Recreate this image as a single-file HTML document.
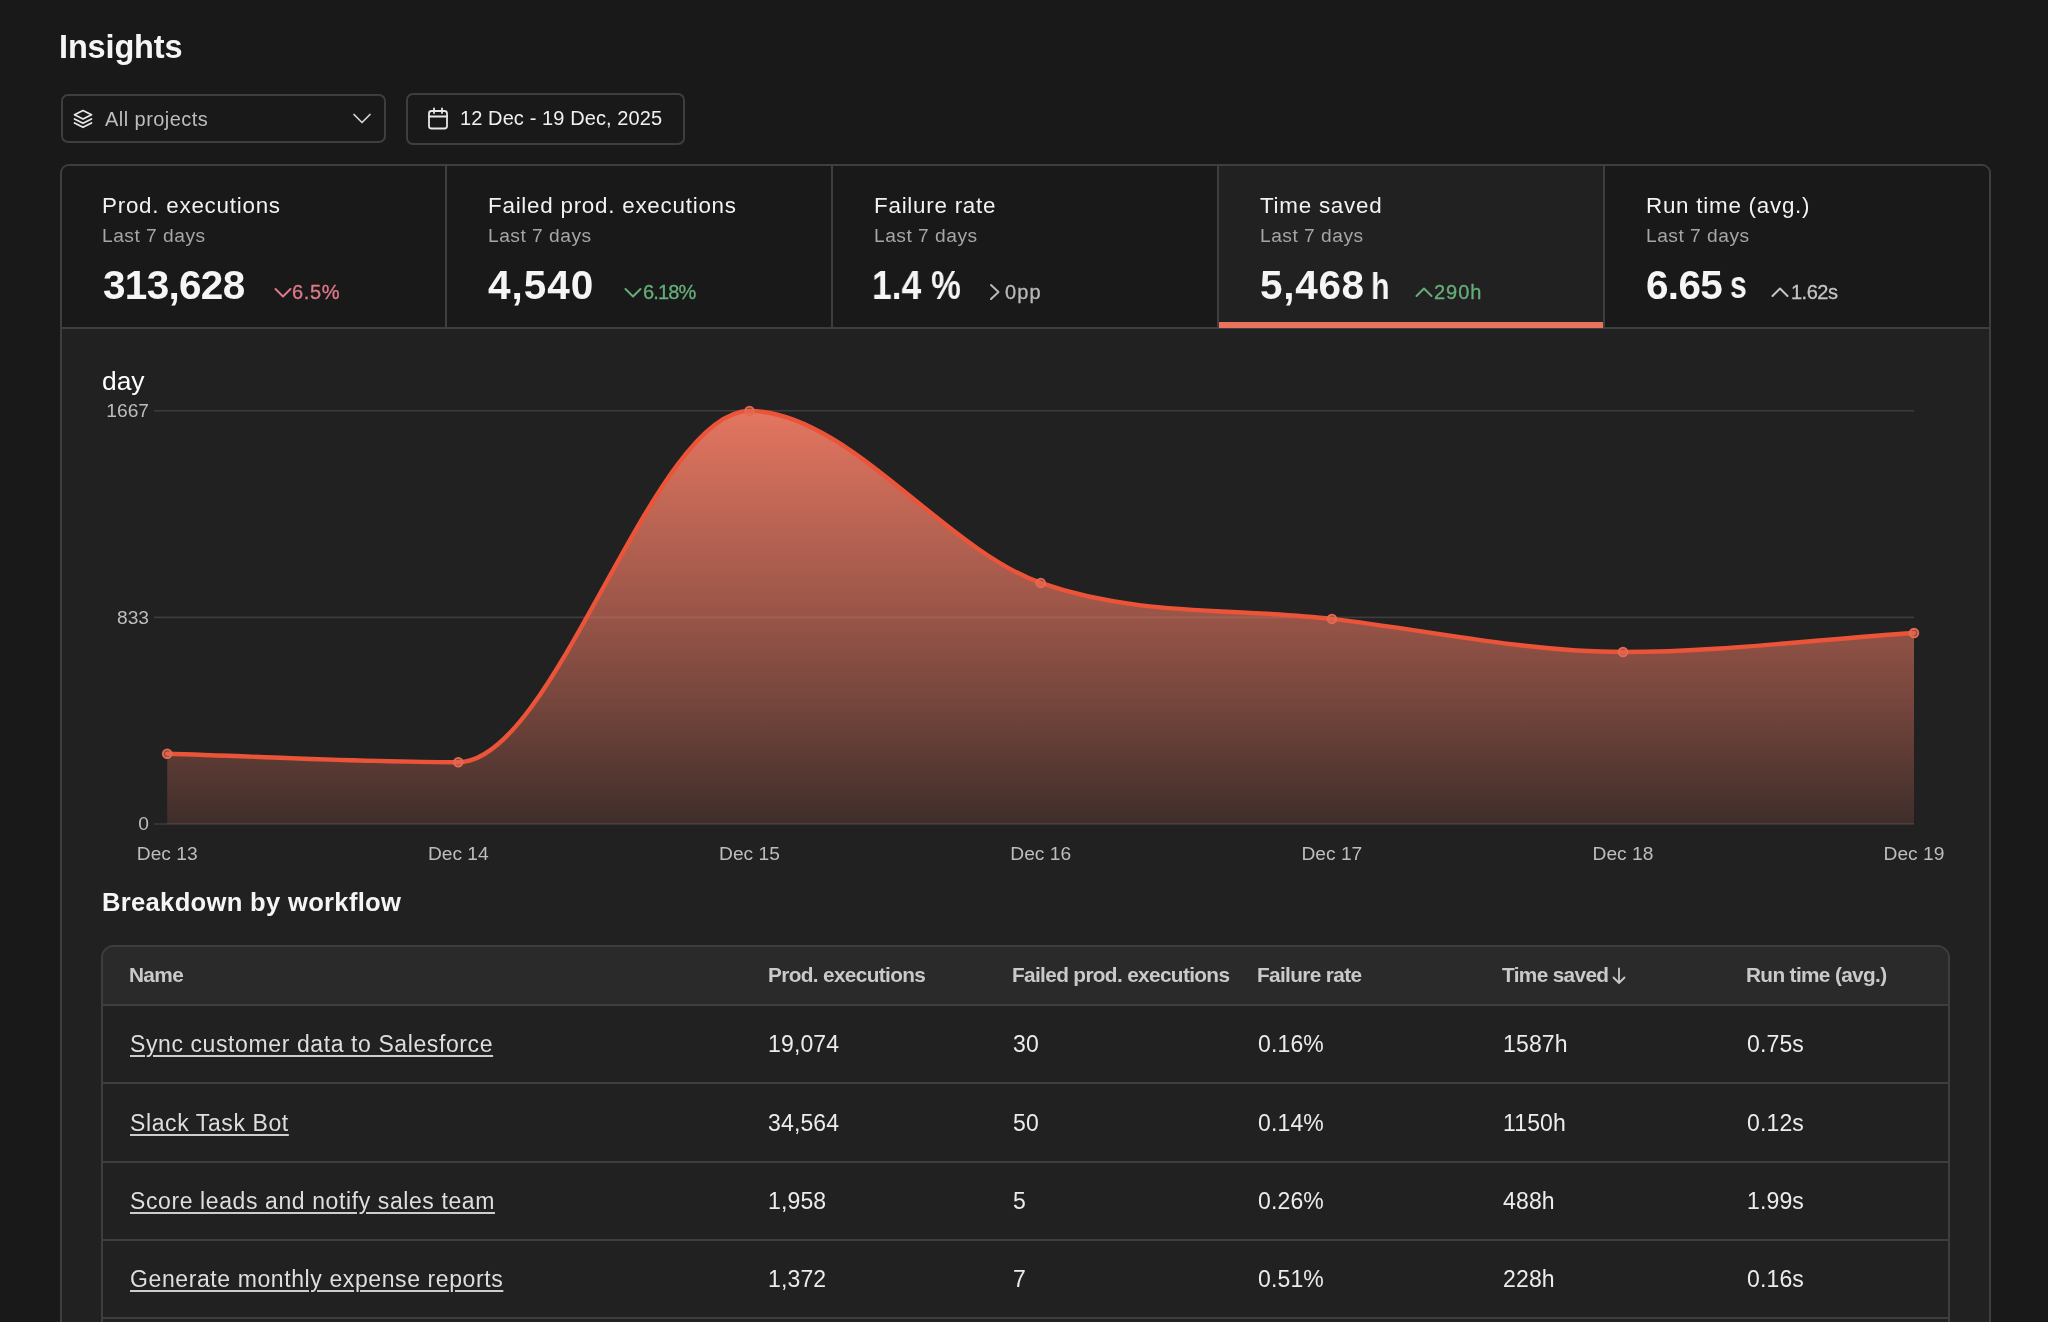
<!DOCTYPE html>
<html><head><meta charset="utf-8">
<style>
*{box-sizing:border-box;margin:0;padding:0}
html,body{width:2048px;height:1322px;overflow:hidden;background:#191919}
body{position:relative;font-family:"Liberation Sans",sans-serif;color:#f2f2f2}
.t{position:absolute;white-space:nowrap;line-height:1;will-change:transform}
.box{position:absolute;border:2px solid #3e3e3e}
</style></head><body>

<!-- title -->
<div class="t" style="left:58.5px;top:31px;font-size:32.5px;font-weight:bold;letter-spacing:-0.15px;color:#f5f5f5">Insights</div>

<!-- project dropdown -->
<div class="box" style="left:60.5px;top:94px;width:325.5px;height:48.5px;border-radius:7px;background:#191919"></div>
<svg style="position:absolute;left:72px;top:108px" width="22" height="22" viewBox="0 0 22 22" fill="none" stroke="#e8e8e8" stroke-width="1.7" stroke-linejoin="round" stroke-linecap="round">
  <path d="M11 2.5 L19.5 6.8 L11 11.1 L2.5 6.8 Z"/>
  <path d="M2.5 11 L11 15.3 L19.5 11"/>
  <path d="M2.5 15 L11 19.3 L19.5 15"/>
</svg>
<div class="t" style="left:104.5px;top:108.6px;font-size:20px;letter-spacing:0.45px;color:#bdbdbd">All projects</div>
<svg style="position:absolute;left:352px;top:112px" width="20" height="14" viewBox="0 0 20 14" fill="none" stroke="#d6d6d6" stroke-width="1.7" stroke-linecap="round" stroke-linejoin="round">
  <path d="M2 2.5 L10 10.5 L18 2.5"/>
</svg>

<!-- date button -->
<div class="box" style="left:406px;top:93px;width:279px;height:52px;border-radius:7px;background:#191919"></div>
<svg style="position:absolute;left:426px;top:106px" width="24" height="25" viewBox="0 0 24 25" fill="none" stroke="#e8e8e8" stroke-width="1.8" stroke-linecap="round" stroke-linejoin="round">
  <rect x="3" y="5" width="18" height="17.5" rx="2.5"/>
  <path d="M3 10.5 H21"/>
  <path d="M8 2.5 V7"/>
  <path d="M16 2.5 V7"/>
</svg>
<div class="t" style="left:460px;top:108.4px;font-size:20px;letter-spacing:0.1px;color:#f0f0f0">12 Dec - 19 Dec, 2025</div>

<!-- main container -->
<div style="position:absolute;left:60px;top:164px;width:1931px;height:1300px;border:2px solid #3e3e3e;border-radius:9px;background:#212121;overflow:hidden">
  <div style="position:absolute;left:0;top:0;width:1927px;height:161px;background:#191919"></div>
  <div style="position:absolute;left:1157px;top:0;width:384px;height:161px;background:#212121"></div>
  <div style="position:absolute;left:383px;top:0;width:2px;height:162px;background:#3e3e3e"></div>
  <div style="position:absolute;left:769px;top:0;width:2px;height:162px;background:#3e3e3e"></div>
  <div style="position:absolute;left:1155px;top:0;width:2px;height:162px;background:#3e3e3e"></div>
  <div style="position:absolute;left:1541px;top:0;width:2px;height:162px;background:#3e3e3e"></div>
  <div style="position:absolute;left:0;top:161px;width:1927px;height:2px;background:#3e3e3e"></div>
  <div style="position:absolute;left:1157px;top:156px;width:384px;height:6px;background:#ea735e"></div>
</div>

<!-- tile texts -->
<div class="t" style="left:102px;top:195.3px;font-size:22.4px;letter-spacing:0.75px;color:#f2f2f2">Prod. executions</div>
<div class="t" style="left:102px;top:226.4px;font-size:19.2px;letter-spacing:0.5px;color:#a6a6a6">Last 7 days</div>
<div class="t" style="left:102.5px;top:264.7px;font-size:40.5px;font-weight:bold;letter-spacing:-0.7px;color:#f5f5f5">313,628</div>
<svg style="position:absolute;left:273px;top:286px" width="20" height="14" viewBox="0 0 20 14" fill="none" stroke="#e07a8a" stroke-width="2" stroke-linecap="round" stroke-linejoin="round"><path d="M2.5 3 L10 10.5 L17.5 3"/></svg>
<div class="t" style="left:292px;top:281.8px;font-size:20px;letter-spacing:0.65px;color:#e07a8a;-webkit-text-stroke:0.3px currentColor">6.5%</div>

<div class="t" style="left:487.5px;top:195.3px;font-size:22.4px;letter-spacing:0.75px;color:#f2f2f2">Failed prod. executions</div>
<div class="t" style="left:487.5px;top:226.4px;font-size:19.2px;letter-spacing:0.5px;color:#a6a6a6">Last 7 days</div>
<div class="t" style="left:488px;top:264.7px;font-size:40.5px;font-weight:bold;letter-spacing:1.0px;color:#f5f5f5">4,540</div>
<svg style="position:absolute;left:623px;top:286px" width="20" height="14" viewBox="0 0 20 14" fill="none" stroke="#66ad7a" stroke-width="2" stroke-linecap="round" stroke-linejoin="round"><path d="M2.5 3 L10 10.5 L17.5 3"/></svg>
<div class="t" style="left:642.5px;top:281.8px;font-size:20px;letter-spacing:-0.85px;color:#66ad7a;-webkit-text-stroke:0.3px currentColor">6.18%</div>

<div class="t" style="left:873.5px;top:195.3px;font-size:22.4px;letter-spacing:0.75px;color:#f2f2f2">Failure rate</div>
<div class="t" style="left:873.5px;top:226.4px;font-size:19.2px;letter-spacing:0.5px;color:#a6a6a6">Last 7 days</div>
<div class="t" style="left:872px;top:264.7px;font-size:40.5px;font-weight:bold;transform:scaleX(0.875);transform-origin:0 0;color:#f5f5f5">1.4</div>
<div class="t" style="left:930.5px;top:264.7px;font-size:40.5px;font-weight:bold;color:#f5f5f5;transform:scaleX(0.83);transform-origin:0 0">%</div>
<svg style="position:absolute;left:988px;top:283px" width="14" height="18" viewBox="0 0 14 18" fill="none" stroke="#b8b8b8" stroke-width="2" stroke-linecap="round" stroke-linejoin="round"><path d="M3 2 L10.5 9 L3 16"/></svg>
<div class="t" style="left:1005px;top:281.8px;font-size:20px;letter-spacing:1.1px;color:#b8b8b8;-webkit-text-stroke:0.3px currentColor">0pp</div>

<div class="t" style="left:1259.5px;top:195.3px;font-size:22.4px;letter-spacing:0.75px;color:#f2f2f2">Time saved</div>
<div class="t" style="left:1259.5px;top:226.4px;font-size:19.2px;letter-spacing:0.5px;color:#a6a6a6">Last 7 days</div>
<div class="t" style="left:1259.5px;top:264.7px;font-size:40.5px;font-weight:bold;letter-spacing:0.7px;color:#f5f5f5">5,468</div>
<div class="t" style="left:1370.5px;top:268.6px;font-size:36px;font-weight:bold;color:#f5f5f5;transform:scaleX(0.84);transform-origin:0 0">h</div>
<svg style="position:absolute;left:1414px;top:285px" width="20" height="14" viewBox="0 0 20 14" fill="none" stroke="#66ad7a" stroke-width="2" stroke-linecap="round" stroke-linejoin="round"><path d="M2.5 11 L10 3.5 L17.5 11"/></svg>
<div class="t" style="left:1434px;top:281.8px;font-size:20px;letter-spacing:1.0px;color:#66ad7a;-webkit-text-stroke:0.3px currentColor">290h</div>

<div class="t" style="left:1645.5px;top:195.3px;font-size:22.4px;letter-spacing:0.75px;color:#f2f2f2">Run time (avg.)</div>
<div class="t" style="left:1645.5px;top:226.4px;font-size:19.2px;letter-spacing:0.5px;color:#a6a6a6">Last 7 days</div>
<div class="t" style="left:1645.5px;top:264.7px;font-size:40.5px;font-weight:bold;letter-spacing:-0.7px;color:#f5f5f5">6.65</div>
<div class="t" style="left:1729.5px;top:266.4px;font-size:38.5px;font-weight:bold;color:#f5f5f5;transform:scaleX(0.78);transform-origin:0 0">s</div>
<svg style="position:absolute;left:1770px;top:285px" width="20" height="14" viewBox="0 0 20 14" fill="none" stroke="#c4c4c4" stroke-width="2" stroke-linecap="round" stroke-linejoin="round"><path d="M2.5 11 L10 3.5 L17.5 11"/></svg>
<div class="t" style="left:1790.5px;top:281.8px;font-size:20px;letter-spacing:-0.5px;color:#c4c4c4;-webkit-text-stroke:0.3px currentColor">1.62s</div>


<!-- chart -->
<div class="t" style="left:101.5px;top:367.6px;font-size:26.4px;color:#ffffff">day</div>
<svg style="position:absolute;left:0;top:0" width="2048" height="1322">
  <defs>
    <linearGradient id="g" x1="0" y1="410.5" x2="0" y2="824" gradientUnits="userSpaceOnUse">
      <stop offset="0" stop-color="#e87862" stop-opacity="0.98"/>
      <stop offset="0.5" stop-color="#e87862" stop-opacity="0.6"/>
      <stop offset="0.7" stop-color="#e87862" stop-opacity="0.43"/>
      <stop offset="1" stop-color="#e87862" stop-opacity="0.15"/>
    </linearGradient>
  </defs>
  <g stroke="rgba(255,255,255,0.13)" stroke-width="1.6">
    <line x1="154" y1="410.8" x2="1914" y2="410.8"/>
    <line x1="154" y1="617.4" x2="1914" y2="617.4"/>
    <line x1="154" y1="824" x2="1914" y2="824"/>
  </g>
  <path d="M167.2,753.7 C264.2,756.5 361.3,762.2 458.3,762.2 C555.4,762.2 652.4,410.9 749.5,410.9 C846.6,410.9 943.6,548.7 1040.7,582.9 C1137.8,617.1 1234.8,607.5 1331.9,618.9 C1428.9,630.2 1526.0,652.0 1623.0,652.0 C1720.0,652.0 1817.0,639.3 1914.0,633.0 L1914,824 L167.2,824 Z" fill="url(#g)"/>
  <path d="M167.2,753.7 C264.2,756.5 361.3,762.2 458.3,762.2 C555.4,762.2 652.4,410.9 749.5,410.9 C846.6,410.9 943.6,548.7 1040.7,582.9 C1137.8,617.1 1234.8,607.5 1331.9,618.9 C1428.9,630.2 1526.0,652.0 1623.0,652.0 C1720.0,652.0 1817.0,639.3 1914.0,633.0" fill="none" stroke="#ec5439" stroke-width="4.4" stroke-linecap="round" stroke-linejoin="round"/>
  <g fill="rgba(228,108,86,0.55)" stroke="#e46c56" stroke-width="1.9"><circle cx="167.2" cy="753.7" r="4.3"/><circle cx="458.3" cy="762.2" r="4.3"/><circle cx="749.5" cy="410.9" r="4.3"/><circle cx="1040.7" cy="582.9" r="4.3"/><circle cx="1331.9" cy="618.9" r="4.3"/><circle cx="1623.0" cy="652.0" r="4.3"/><circle cx="1914.0" cy="633.0" r="4.3"/></g>
  <g font-family="Liberation Sans" font-size="19.2" fill="#bdbdbd" text-anchor="end">
    <text x="149" y="417.2">1667</text>
    <text x="149" y="623.8">833</text>
    <text x="149" y="830.4">0</text>
  </g>
  <g font-family="Liberation Sans" font-size="19.2" fill="#bdbdbd" text-anchor="middle"><text x="167.2" y="860">Dec 13</text><text x="458.3" y="860">Dec 14</text><text x="749.5" y="860">Dec 15</text><text x="1040.7" y="860">Dec 16</text><text x="1331.9" y="860">Dec 17</text><text x="1623.0" y="860">Dec 18</text><text x="1914.0" y="860">Dec 19</text></g>
</svg>

<!-- breakdown -->
<div class="t" style="left:101.5px;top:890px;font-size:25.6px;font-weight:bold;letter-spacing:0.3px;color:#f5f5f5">Breakdown by workflow</div>
<div style="position:absolute;left:101px;top:944.5px;width:1849px;height:500px;border:2px solid #3e3e3e;border-radius:13px;background:#212121;overflow:hidden">
  <div style="position:absolute;left:0;top:0;right:0;height:59.5px;background:#2a2a2a;border-bottom:2px solid #3e3e3e"></div>
  <div style="position:absolute;left:0;right:0;top:135.8px;height:2px;background:#3e3e3e"></div>
  <div style="position:absolute;left:0;right:0;top:214.1px;height:2px;background:#3e3e3e"></div>
  <div style="position:absolute;left:0;right:0;top:292.5px;height:2px;background:#3e3e3e"></div>
  <div style="position:absolute;left:0;right:0;top:370.8px;height:2px;background:#3e3e3e"></div>
</div>
<div class="t" style="left:128.8px;top:965.4px;font-size:20.8px;font-weight:bold;letter-spacing:-0.65px;color:#c9c9c9">Name</div>
<div class="t" style="left:767.6px;top:965.4px;font-size:20.8px;font-weight:bold;letter-spacing:-0.65px;color:#c9c9c9">Prod. executions</div>
<div class="t" style="left:1012.2px;top:965.4px;font-size:20.8px;font-weight:bold;letter-spacing:-0.65px;color:#c9c9c9">Failed prod. executions</div>
<div class="t" style="left:1256.9px;top:965.4px;font-size:20.8px;font-weight:bold;letter-spacing:-0.65px;color:#c9c9c9">Failure rate</div>
<div class="t" style="left:1501.9px;top:965.4px;font-size:20.8px;font-weight:bold;letter-spacing:-0.65px;color:#c9c9c9">Time saved</div>
<div class="t" style="left:1746.1px;top:965.4px;font-size:20.8px;font-weight:bold;letter-spacing:-0.65px;color:#c9c9c9">Run time (avg.)</div>
<svg style="position:absolute;left:1611px;top:966px" width="16" height="20" viewBox="0 0 16 20" fill="none" stroke="#c9c9c9" stroke-width="1.8" stroke-linecap="round" stroke-linejoin="round"><path d="M8 2.5 V17 M2.5 11.5 L8 17 L13.5 11.5"/></svg>
<div class="t" style="left:129.6px;top:1033.3px;font-size:23px;letter-spacing:0.6px;color:#dedede;text-decoration:underline;text-decoration-color:#cdcdcd;text-decoration-thickness:1.5px;text-underline-offset:2.5px">Sync customer data to Salesforce</div>
<div class="t" style="left:768.4px;top:1033.3px;font-size:23px;letter-spacing:0.15px;color:#ececec">19,074</div>
<div class="t" style="left:1013px;top:1033.3px;font-size:23px;letter-spacing:0.15px;color:#ececec">30</div>
<div class="t" style="left:1257.7px;top:1033.3px;font-size:23px;letter-spacing:0.15px;color:#ececec">0.16%</div>
<div class="t" style="left:1502.7px;top:1033.3px;font-size:23px;letter-spacing:0.15px;color:#ececec">1587h</div>
<div class="t" style="left:1746.9px;top:1033.3px;font-size:23px;letter-spacing:0.15px;color:#ececec">0.75s</div>
<div class="t" style="left:129.6px;top:1111.7px;font-size:23px;letter-spacing:0.6px;color:#dedede;text-decoration:underline;text-decoration-color:#cdcdcd;text-decoration-thickness:1.5px;text-underline-offset:2.5px">Slack Task Bot</div>
<div class="t" style="left:768.4px;top:1111.7px;font-size:23px;letter-spacing:0.15px;color:#ececec">34,564</div>
<div class="t" style="left:1013px;top:1111.7px;font-size:23px;letter-spacing:0.15px;color:#ececec">50</div>
<div class="t" style="left:1257.7px;top:1111.7px;font-size:23px;letter-spacing:0.15px;color:#ececec">0.14%</div>
<div class="t" style="left:1502.7px;top:1111.7px;font-size:23px;letter-spacing:0.15px;color:#ececec">1150h</div>
<div class="t" style="left:1746.9px;top:1111.7px;font-size:23px;letter-spacing:0.15px;color:#ececec">0.12s</div>
<div class="t" style="left:129.6px;top:1190.0px;font-size:23px;letter-spacing:0.6px;color:#dedede;text-decoration:underline;text-decoration-color:#cdcdcd;text-decoration-thickness:1.5px;text-underline-offset:2.5px">Score leads and notify sales team</div>
<div class="t" style="left:768.4px;top:1190.0px;font-size:23px;letter-spacing:0.15px;color:#ececec">1,958</div>
<div class="t" style="left:1013px;top:1190.0px;font-size:23px;letter-spacing:0.15px;color:#ececec">5</div>
<div class="t" style="left:1257.7px;top:1190.0px;font-size:23px;letter-spacing:0.15px;color:#ececec">0.26%</div>
<div class="t" style="left:1502.7px;top:1190.0px;font-size:23px;letter-spacing:0.15px;color:#ececec">488h</div>
<div class="t" style="left:1746.9px;top:1190.0px;font-size:23px;letter-spacing:0.15px;color:#ececec">1.99s</div>
<div class="t" style="left:129.6px;top:1268.4px;font-size:23px;letter-spacing:0.6px;color:#dedede;text-decoration:underline;text-decoration-color:#cdcdcd;text-decoration-thickness:1.5px;text-underline-offset:2.5px">Generate monthly expense reports</div>
<div class="t" style="left:768.4px;top:1268.4px;font-size:23px;letter-spacing:0.15px;color:#ececec">1,372</div>
<div class="t" style="left:1013px;top:1268.4px;font-size:23px;letter-spacing:0.15px;color:#ececec">7</div>
<div class="t" style="left:1257.7px;top:1268.4px;font-size:23px;letter-spacing:0.15px;color:#ececec">0.51%</div>
<div class="t" style="left:1502.7px;top:1268.4px;font-size:23px;letter-spacing:0.15px;color:#ececec">228h</div>
<div class="t" style="left:1746.9px;top:1268.4px;font-size:23px;letter-spacing:0.15px;color:#ececec">0.16s</div>

</body></html>
